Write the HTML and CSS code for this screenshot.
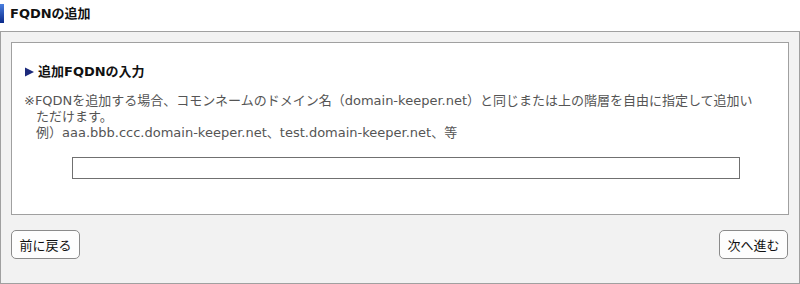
FILE: index.html
```html
<!DOCTYPE html>
<html lang="ja">
<head>
<meta charset="utf-8">
<title>FQDNの追加</title>
<link rel="stylesheet" href="styles.css">
</head>
<body>
<header class="title-bar">
  <span class="title-accent"></span>
  <h1 class="title-text">FQDNの追加</h1>
</header>
<section class="panel">
  <div class="card">
    <h2 class="card-heading"><svg class="tri" width="9" height="10" viewBox="0 0 9 10"><path d="M0 0.5 L9 5 L0 9.5 Z"/></svg>追加FQDNの入力</h2>
    <p class="note">
      <span class="note-line">※FQDNを追加する場合、コモンネームのドメイン名（domain-keeper.net）と同じまたは上の階層を自由に指定して追加い</span>
      <span class="note-line indent">ただけます。</span>
      <span class="note-line indent">例）aaa.bbb.ccc.domain-keeper.net、test.domain-keeper.net、等</span>
    </p>
    <div class="field"><input class="text-input" type="text"></div>
  </div>
  <div class="actions">
    <button class="btn" type="button">前に戻る</button>
    <button class="btn" type="button">次へ進む</button>
  </div>
</section>
</body>
</html>
```
FILE: styles.css
```css
* { box-sizing: border-box; }
html, body { margin: 0; padding: 0; background: #fff; }
body {
  font-family: "DejaVu Sans", "Noto Sans CJK JP", sans-serif;
  font-size: 13px;
  color: #222;
}
.title-bar {
  height: 31px;
  display: flex;
  align-items: flex-start;
  padding-top: 4px;
}
.title-accent {
  width: 4px;
  height: 19px;
  background: linear-gradient(#4a7fe0, #0a2a8a);
}
.title-text {
  margin: 0 0 0 6px;
  font-size: 13px;
  font-weight: bold;
  line-height: 19px;
  color: #111;
}
.panel {
  background: #f2f2f2;
  border: 1px solid #a0a0a0;
  padding: 10px 10px 24px 10px;
  height: 253px;
}
.card {
  background: #fff;
  border: 1px solid #a0a0a0;
  padding: 21px 12px 0 12px;
  height: 173px;
}
.card-heading {
  margin: 0;
  font-size: 13px;
  font-weight: bold;
  line-height: 16px;
  color: #111;
  display: flex;
  align-items: center;
}
.tri {
  fill: #1c2a7c;
  margin-left: 1px;
  margin-right: 4px;
  flex: none;
}
.note {
  margin: 13px 0 0 0;
  color: #555;
  line-height: 16px;
}
.note-line {
  display: block;
  white-space: nowrap;
}
.note-line.indent { padding-left: 12px; }
.field {
  margin-top: 16px;
  padding-left: 48px;
}
.text-input {
  display: block;
  width: 668px;
  height: 22px;
  border: 1px solid #707070;
  border-radius: 0;
  padding: 0 4px;
  background: #fff;
  font: inherit;
}
.actions {
  margin-top: 15px;
  display: flex;
  justify-content: space-between;
  padding-right: 1px;
}
.btn {
  height: 29px;
  min-width: 69px;
  padding: 0 7px;
  border: 1px solid #8a8a8a;
  border-radius: 5px;
  background: #fdfdfd;
  font: inherit;
  font-size: 13px;
  color: #111;
  text-align: center;
}
```
